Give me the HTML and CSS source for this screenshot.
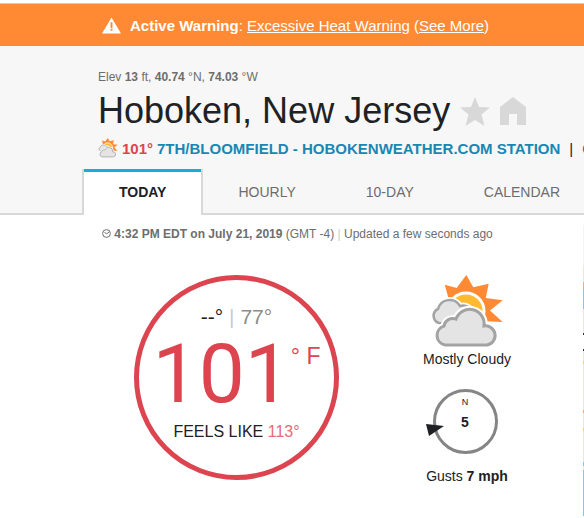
FILE: index.html
```html
<!DOCTYPE html>
<html lang="en">
<head>
    <meta charset="UTF-8">
    <meta name="viewport" content="width=device-width, initial-scale=1.0">
    <title>Hoboken, New Jersey Weather</title>
    <link rel="stylesheet" href="styles.css">
</head>
<body>
    <svg class="symbols" aria-hidden="true">
        <symbol id="mostly-cloudy" viewBox="0 0 74 74">
            <path fill="#ff8a33" d="M14.700 9.700L26.700 13 36.300 0 43.300 12.300 58.700 8.700 55.700 23 72.700 25.300 60 35.500 72.700 47 50 46 19 25z"/>
            <circle cx="36" cy="36" r="18" fill="#ffba2f" stroke="#fff" stroke-width="3"/>
            <path d="M9 48A7.500 7.500 0 0 1 8 34A12 12 0 0 1 30 31A10 10 0 0 1 42 36L30 50z" fill="#e4e4e4" stroke="#fff" stroke-width="6"/>
            <path d="M9 48A7.500 7.500 0 0 1 8 34A12 12 0 0 1 30 31A10 10 0 0 1 42 36L30 50z" fill="#e4e4e4" stroke="#a3a3a3" stroke-width="2.500"/>
            <path d="M15 70A9.800 9.800 0 0 1 14 51A9 9 0 0 1 26 44A14.500 14.500 0 0 1 54 51A9.600 9.600 0 0 1 57 70z" fill="#e4e4e4" stroke="#fff" stroke-width="7"/>
            <path d="M15 70A9.800 9.800 0 0 1 14 51A9 9 0 0 1 26 44A14.500 14.500 0 0 1 54 51A9.600 9.600 0 0 1 57 70z" fill="#e4e4e4" stroke="#a3a3a3" stroke-width="3"/>
        </symbol>
    </svg>

    <div class="topbar"></div>
    <div class="alert">
        <svg class="alert-icon" viewBox="0 0 20 17" aria-hidden="true">
            <path fill="#fff" d="M10 0l10 17H0z"/>
            <path fill="#ff8a33" d="M9 5h2v6H9zM9 12h2v2H9z"/>
        </svg>
        <p><strong>Active Warning</strong>: <a href="#">Excessive Heat Warning</a> (<a href="#">See More</a>)</p>
    </div>

    <header class="header">
        <p class="elevation">Elev <b>13</b> ft, <b>40.74</b> °N, <b>74.03</b> °W</p>
        <div class="city">
            <h1>Hoboken, New Jersey</h1>
            <button type="button" aria-label="Add to favorites">
                <svg width="30" height="29" viewBox="0 0 30 29"><path d="M15 0l4 10 11 .5-8.500 7L24.500 29 15 23 5.500 29l3-11.500L0 10.500 11 10z"/></svg>
            </button>
            <button type="button" aria-label="Set as home">
                <svg width="26" height="28" viewBox="0 0 26 28"><path d="M13 0l13 10v18h-9V17H9v11H0V10z"/></svg>
            </button>
        </div>
        <div class="station">
            <svg class="station-icon" aria-hidden="true"><use href="#mostly-cloudy"/></svg>
            <span class="station-temp">101°</span>
            <a href="#">7TH/BLOOMFIELD - HOBOKENWEATHER.COM STATION</a>
            <span class="divider">|</span>
            <a class="change" href="#">CHANGE</a>
        </div>
        <nav class="tabs">
            <a class="active" href="#">TODAY</a>
            <a href="#">HOURLY</a>
            <a href="#">10-DAY</a>
            <a href="#">CALENDAR</a>
        </nav>
    </header>

    <main class="main">
        <div class="current">
            <p class="timestamp">
                <svg width="9" height="9" viewBox="0 0 9 9" aria-hidden="true"><circle cx="4.500" cy="4.500" r="3.900"/><path d="M2.500 3l2 2 2.500-2"/></svg>
                <strong>4:32 PM EDT on July 21, 2019</strong> (GMT -4) <i>|</i> Updated a few seconds ago
            </p>
            <div class="conditions">
                <div class="dial">
                    <p class="hi-lo">--° <i>|</i> <span>77°</span></p>
                    <p class="temp">101<span>° F</span></p>
                    <p class="feels">FEELS LIKE <span>113°</span></p>
                </div>
                <div class="sky">
                    <svg class="sky-icon" aria-hidden="true"><use href="#mostly-cloudy"/></svg>
                    <p>Mostly Cloudy</p>
                    <div class="wind">
                        <span>N</span>
                        <strong>5</strong>
                        <svg class="wind-arrow" width="18" height="12" viewBox="0 0 18 12" aria-hidden="true"><path d="M0 0l18 2L3 12z"/></svg>
                    </div>
                    <p>Gusts <strong>7 mph</strong></p>
                </div>
            </div>
        </div>
        <div class="map"></div>
    </main>
</body>
</html>
```
FILE: styles.css
```css
* {
    box-sizing: border-box;
}

body {
    margin: 0;
    font-family: "Liberation Sans", Arial, sans-serif;
    font-size: 14px;
    color: #202124;
    background: white;
}

p, h1 {
    margin: 0;
    font-weight: normal;
}

i {
    font-style: normal;
    color: #ccc;
}

.symbols {
    display: none;
}

.topbar {
    height: 4px;
    border-bottom: 1px solid #ccc;
}

.alert {
    display: flex;
    align-items: center;
    gap: 9px;
    height: 42px;
    padding-left: 102px;
    background: #ff8a33;
    color: white;
    font-size: 15px;
    white-space: nowrap;
}

.alert-icon {
    width: 19px;
    height: 17px;
}

.alert a {
    color: white;
}

.header {
    background: #f7f7f7;
    white-space: nowrap;
}

.elevation {
    padding: 24px 0 0 98px;
    font-size: 12px;
    line-height: 14px;
    color: #6d6d6d;
}

.city {
    display: flex;
    align-items: center;
    gap: 10px;
    height: 54px;
    padding-left: 98px;
}

.city h1 {
    font-size: 36px;
}

.city button {
    display: flex;
    padding: 0;
    border: none;
    background: none;
    fill: #d8d8d8;
    cursor: pointer;
}

.station {
    display: flex;
    align-items: center;
    gap: 4px;
    height: 20px;
    padding-left: 98px;
    overflow: hidden;
    font-size: 15px;
    font-weight: bold;
}

.station a {
    color: #1887b4;
    text-decoration: none;
}

.station-icon {
    flex: none;
    width: 20px;
    height: 20px;
}

.station-temp {
    color: #dc4550;
}

.divider {
    padding: 0 5px;
    font-weight: normal;
}

.station .change {
    color: #6d6d6d;
}

.tabs {
    display: flex;
    height: 46px;
    margin-top: 11px;
    padding-left: 82px;
    overflow: hidden;
    box-shadow: inset 0 -2px #d8d8d8;
}

.tabs a {
    padding: 0 35px;
    line-height: 46px;
    color: #6d6d6d;
    text-decoration: none;
}

.tabs .active {
    border: solid #d8d8d8;
    border-width: 0 2px;
    background: linear-gradient(#18acdc 3px, white 3px);
    color: #202124;
    font-weight: bold;
}

.main {
    display: flex;
    align-items: stretch;
}

.current {
    flex: 1;
    padding: 12px 0 30px;
}

.timestamp {
    padding-left: 102px;
    font-size: 12px;
    line-height: 14px;
    color: #6d6d6d;
}

.timestamp svg {
    fill: none;
    stroke: #6d6d6d;
}

.conditions {
    display: flex;
    gap: 84px;
    margin-top: 34px;
    padding-left: 134px;
}

.dial {
    flex: none;
    width: 205px;
    height: 205px;
    padding-top: 25px;
    border: 5px solid #dc4550;
    border-radius: 50%;
    text-align: center;
}

.hi-lo {
    font-size: 21px;
    line-height: 24px;
}

.hi-lo span {
    color: #8c8c8c;
}

.temp {
    display: flex;
    justify-content: center;
    font-family: Roboto, "Liberation Sans", sans-serif;
    font-size: 82px;
    line-height: 90px;
    color: #dc4550;
}

.temp span {
    font-family: "Liberation Sans", Arial, sans-serif;
    font-size: 23px;
    line-height: 54px;
}

.feels {
    font-size: 16px;
    line-height: 26px;
}

.feels span {
    color: #e66b74;
}

.sky {
    display: flex;
    flex-direction: column;
    align-items: center;
    width: 88px;
    white-space: nowrap;
}

.sky p {
    line-height: 20px;
}

.sky-icon {
    width: 74px;
    height: 74px;
}

.wind {
    position: relative;
    display: flex;
    flex-direction: column;
    align-items: center;
    width: 65px;
    height: 65px;
    margin: 20px 4px 12px 0;
    border: 3px solid #858585;
    border-radius: 50%;
}

.wind span {
    padding-top: 2px;
    font-size: 9px;
    line-height: 16px;
}

.wind strong {
    line-height: 24px;
}

.wind-arrow {
    position: absolute;
    top: 32px;
    left: -10px;
    fill: #202124;
}

/* edge of the radar map */
.map {
    width: 1px;
    margin-top: 10px;
    background: linear-gradient(
        #f4f4f4 40px,
        #e9e7df 40px 57px,
        #f5a67a 57px 63px,
        #80c8ea 65px 84px,
        #e9e7df 84px 108px,
        #333 108px 110px,
        white 110px 124px,
        #333 124px 126px,
        #e9e7df 126px 136px,
        #e8d774 136px 139px,
        #e9e7df 139px 185px,
        #f5a67a 185px 188px,
        #e9e7df 188px 203px,
        #e8d774 203px 206px,
        #e9e7df 206px 237px,
        #80c8ea 237px 241px,
        #e9e7df 241px 245px,
        #80c8ea 245px
    );
}
```
